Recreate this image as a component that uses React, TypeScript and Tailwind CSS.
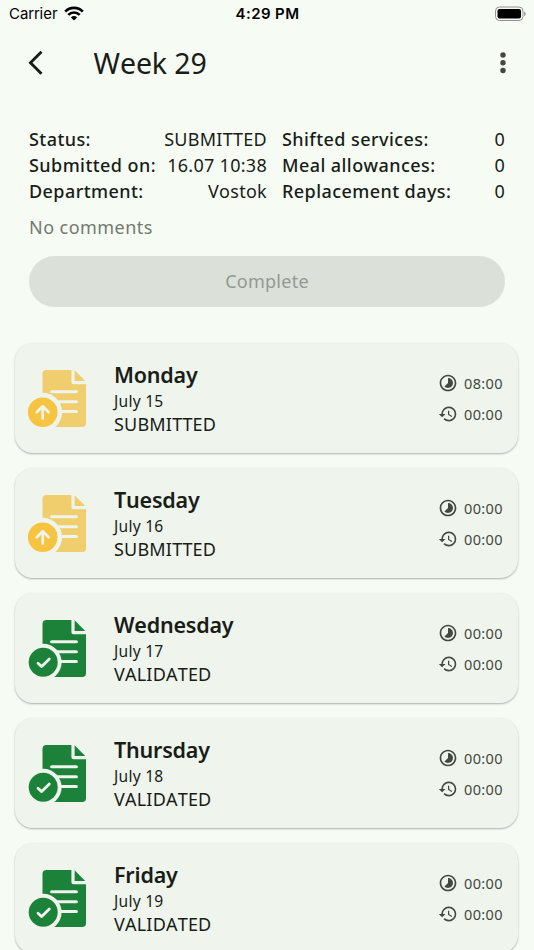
import React from "react";
import { MdHistory, MdTimelapse } from "react-icons/md";

type Status = "SUBMITTED" | "VALIDATED";

const leftSummary = [
    { label: "Status:", value: "SUBMITTED" },
    { label: "Submitted on:", value: "16.07 10:38" },
    { label: "Department:", value: "Vostok" },
];

const rightSummary = [
    { label: "Shifted services:", value: "0" },
    { label: "Meal allowances:", value: "0" },
    { label: "Replacement days:", value: "0" },
];

const days: { name: string; date: string; status: Status; worked: string; overtime: string }[] = [
    { name: "Monday", date: "July 15", status: "SUBMITTED", worked: "08:00", overtime: "00:00" },
    { name: "Tuesday", date: "July 16", status: "SUBMITTED", worked: "00:00", overtime: "00:00" },
    { name: "Wednesday", date: "July 17", status: "VALIDATED", worked: "00:00", overtime: "00:00" },
    { name: "Thursday", date: "July 18", status: "VALIDATED", worked: "00:00", overtime: "00:00" },
    { name: "Friday", date: "July 19", status: "VALIDATED", worked: "00:00", overtime: "00:00" },
];

function StatusBar() {
    return (
        <div className="grid h-[29px] shrink-0 grid-cols-3 items-center pl-[9px] pr-2 font-['Inter','Liberation_Sans',sans-serif] text-[15px] text-black">
            <div className="flex items-center gap-1.5">
                <span className="tracking-[-0.02px]">Carrier</span>
                <svg className="-mt-0.5" width="20" height="15" viewBox="0 0 20 15" fill="none" stroke="currentColor" strokeWidth="2.7">
                    <path d="M1.2 5.6a12.4 12.4 0 0 1 17.6 0" />
                    <path d="M4.3 8.9a8 8 0 0 1 11.4 0" />
                    <path d="M10 14.5 6.9 11.4a4.4 4.4 0 0 1 6.2 0z" fill="currentColor" stroke="none" />
                </svg>
            </div>
            <span className="text-center font-semibold tracking-[0.4px]">4:29 PM</span>
            <svg className="-mt-0.5 justify-self-end" width="32" height="16" viewBox="0 0 32 16">
                <rect x="1.5" y="1" width="27.5" height="13.5" rx="4" fill="none" stroke="#8f938e" />
                <rect x="3.5" y="3" width="23.5" height="9.5" rx="2" fill="#000" />
                <path d="M30.2 5.5c2 .8 2 3.8 0 4.6z" fill="#8f938e" />
            </svg>
        </div>
    );
}

function SummaryColumn({ rows }: { rows: { label: string; value: string }[] }) {
    return (
        <div className="flex flex-col">
            {rows.map((row) => (
                <div key={row.label} className="flex h-[26px] items-center justify-between whitespace-nowrap">
                    <span className="font-medium tracking-[0.43px]">{row.label}</span>
                    <span className="tracking-[0.28px]">{row.value}</span>
                </div>
            ))}
        </div>
    );
}

function DocumentIcon({ status }: { status: Status }) {
    const validated = status === "VALIDATED";
    const paper = validated ? "#1c8239" : "#f0cd6d";
    const badge = validated ? "#1c8239" : "#f7c441";

    return (
        <svg className="shrink-0" width="60" height="60" viewBox="0 0 60 60" fill="none" strokeLinecap="round" strokeLinejoin="round">
            <path d="M18.5 1.9H43.4V14.3a2 2 0 0 0 2 2H58V55.2a3.8 3.8 0 0 1-3.8 3.8H18.5a4 4 0 0 1-4-4V5.9a4 4 0 0 1 4-4z" fill={paper} />
            <path d="M46.6 2.3 57.2 12.9H46.6z" fill={paper} />
            <path d="M23.6 23.7H48.4M23.6 33.7H48.4M23.6 43.6H48.4" stroke="#eff4ed" strokeWidth="3" />
            <circle cx={validated ? 15.2 : 14.7} cy="44.2" r={validated ? 18.4 : 19.4} fill="#eff4ed" />
            <circle cx={validated ? 15.2 : 14.7} cy="44.2" r={validated ? 14.5 : 14.8} fill={badge} />
            {validated ? (
                <path d="M10 45.2 13.7 48.6 21.3 41" stroke="#eff4ed" strokeWidth="2.8" />
            ) : (
                <path d="M14.7 50.6V38.6M8.8 44.2 14.7 38.3 20.6 44.2" stroke="#eff4ed" strokeWidth="2.7" />
            )}
        </svg>
    );
}

function DayCard({ day }: { day: (typeof days)[number] }) {
    return (
        <div className="flex h-[110px] shrink-0 items-center rounded-[18px] bg-[#eff4ed] pl-[13px] pr-[15px] shadow-[0_1px_2px_rgba(0,0,0,0.3)]">
            <DocumentIcon status={day.status} />
            <div className="ml-[26px] flex flex-1 flex-col">
                <span className="text-[21.5px] font-semibold leading-[29px] tracking-[-0.2px]">{day.name}</span>
                <span className="pt-px text-[15.6px] leading-[23px] tracking-[0.25px]">{day.date}</span>
                <span className="text-[18px] leading-[23px] tracking-[0.2px]">{day.status}</span>
            </div>
            <div className="flex flex-col gap-[11px] text-[14.5px] leading-5 tracking-[0.4px] text-[#414941]">
                <div className="flex items-center gap-1.5">
                    <MdTimelapse size={20} />
                    <span>{day.worked}</span>
                </div>
                <div className="flex items-center gap-1.5">
                    <MdHistory size={20} />
                    <span>{day.overtime}</span>
                </div>
            </div>
        </div>
    );
}

export default function App() {
    return (
        <div className="flex h-[950px] w-[534px] flex-col overflow-hidden bg-[#f6fbf4] font-['Noto_Sans',sans-serif] text-[#181d18] [font-kerning:none]">
            <StatusBar />

            <header className="flex h-[67px] shrink-0 items-center pl-7 pr-[25px]">
                <svg width="16" height="26" viewBox="0 0 16 26" fill="none" stroke="currentColor" strokeWidth="2.9">
                    <path d="M13.5 1.8 2.5 12.8 13.5 23.8" />
                </svg>
                <h1 className="ml-[49.5px] flex-1 pt-0.5 text-[28.5px] tracking-[-0.1px]">Week 29</h1>
                <svg width="12" height="24" viewBox="0 0 12 24" fill="#414941">
                    <circle cx="6" cy="4" r="2.7" />
                    <circle cx="6" cy="11.8" r="2.7" />
                    <circle cx="6" cy="19.5" r="2.7" />
                </svg>
            </header>

            <section className="mt-[30px] shrink-0 px-[29px]">
                <div className="grid grid-cols-[238px_223px] gap-[15px] text-[18px]">
                    <SummaryColumn rows={leftSummary} />
                    <SummaryColumn rows={rightSummary} />
                </div>
                <p className="mt-[10px] text-[18px] leading-[26px] tracking-[0.45px] text-[#727970]">No comments</p>
                <button disabled className="mt-4 h-[51px] w-full rounded-full bg-[#dbe0d9] text-[18px] tracking-[0.25px] text-[#939992]">
                    Complete
                </button>
            </section>

            <main className="mt-9 flex flex-col gap-[15px] pl-[15px] pr-4">
                {days.map((day) => (
                    <DayCard key={day.name} day={day} />
                ))}
            </main>
        </div>
    );
}
